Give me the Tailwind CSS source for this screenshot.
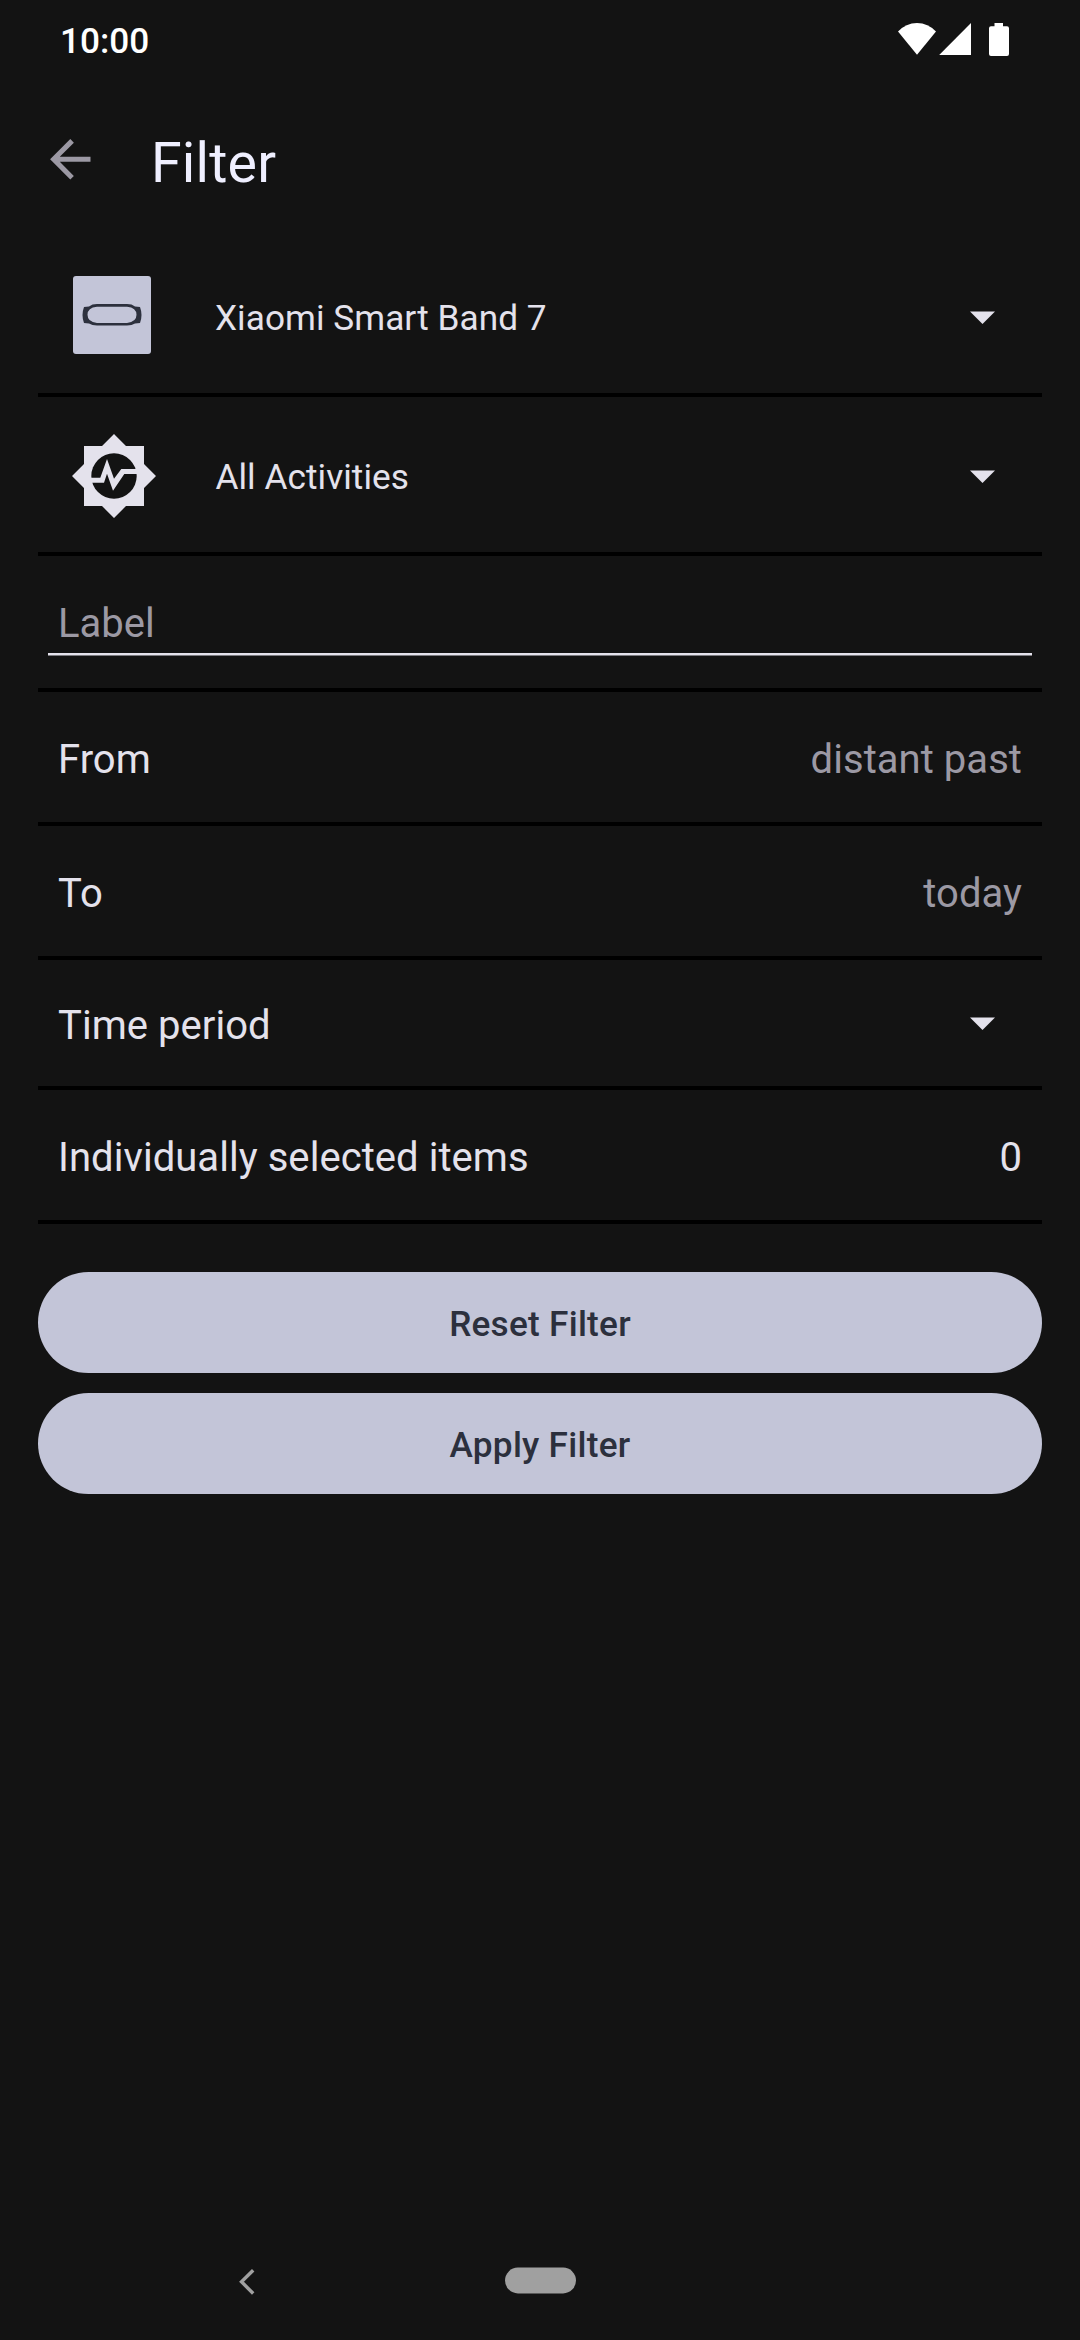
<!DOCTYPE html>
<html lang="en">
<head>
<meta charset="utf-8">
<title>Filter</title>
<script src="https://cdn.jsdelivr.net/npm/@tailwindcss/browser@4"></script>
</head>
<body class="bg-[#131313]">
<div class="w-[1080px] h-[2340px] flex flex-col overflow-hidden bg-[#131313] text-[#e4e2ec] font-['Roboto',sans-serif] leading-none">
  <!-- Status bar -->
  <header class="h-20 flex justify-between pl-[60px] pr-[71px]">
    <span class="pt-[24px] text-[35.2px] font-medium text-white">10:00</span>
    <svg class="w-[111px] h-[34px] mt-[23px] fill-white" viewBox="0 0 111 34">
      <path d="M0 8.6Q8 0 19 0T38 8.6L19 31.7Z"/>
      <path d="M73 0V32H41.2Z"/>
      <path d="M96.5 0H105V3.2H109Q111 3.2 111 5.2V31Q111 33 109 33H93Q91 33 91 31V5.2Q91 3.2 93 3.2H96.5Z"/>
    </svg>
  </header>

  <!-- App bar -->
  <div class="h-[154px] flex pl-10">
    <svg class="w-[60.6px] h-[60.6px] mt-[49.2px] fill-[#9c99a4]" viewBox="0 0 24 24"><path d="M20 11H7.83l5.59-5.59L12 4l-8 8 8 8 1.41-1.41L7.83 13H20v-2z"/></svg>
    <h1 class="ml-[50.4px] mt-[56px] text-[55.5px] tracking-[0.2px] text-[#efefff]">Filter</h1>
  </div>

  <main class="flex flex-col px-[38px]">
    <div class="h-[163px] flex items-start justify-between border-b-4 border-black pl-[35px] pr-[47px]">
      <div class="flex">
        <svg class="w-[78px] h-[78px] mt-[42px]" viewBox="0 0 78 78">
          <rect width="78" height="78" rx="3" fill="#c3c5d8"/>
          <path fill="#2c303d" fill-rule="evenodd" d="M24 28H54Q59 28 62 30.400L67 31Q68.500 35 68.500 39T67 47L62 47.400Q59 49.500 54 49.500H24Q19 49.500 16 47.400L11 47Q9.500 43 9.500 39T11 31L16 30.400Q19 28 24 28ZM24 30.700Q14.500 31.500 14.500 38.800T24 46.900H54Q63.500 46 63.500 38.800T54 30.700Z"/>
        </svg>
        <span class="ml-[64px] mt-[67px] text-[35.2px] tracking-[0.05px]">Xiaomi Smart Band 7</span>
      </div>
      <svg class="w-[25px] h-[13px] mt-[77px] fill-[#e4e2ec]" viewBox="0 0 25 13"><path d="M0 .5H25L12.500 13Z"/></svg>
    </div>

    <div class="h-[159px] flex items-start justify-between border-b-4 border-black pl-[34px] pr-[47px]">
      <div class="flex">
        <svg class="w-[84px] h-[84px] mt-[37px]" viewBox="-42 -42 84 84">
          <path fill="#e4e2ec" d="M0-42L12-30H30V-12L42 0 30 12V30H12L0 42-12 30H-30V12L-42 0-30-12V-30H-12Z"/>
          <circle r="22.700" fill="#131313"/>
          <path fill="#e4e2ec" d="M-24 1.700H-13.700L-7-17 0 2.700 7.300-7H23V-2H10.300L-1 14.700-7-2.300-10 6.700H-24Z"/>
        </svg>
        <span class="ml-[59.5px] mt-[63px] text-[35.2px] tracking-[0.05px]">All Activities</span>
      </div>
      <svg class="w-[25px] h-[13px] mt-[73px] fill-[#e4e2ec]" viewBox="0 0 25 13"><path d="M0 .5H25L12.500 13Z"/></svg>
    </div>

    <div class="h-[136px] border-b-4 border-black px-[10px]">
      <div class="h-[99px] border-b-2 border-[#e4e2ec] pl-[10px] pt-[48px] text-[40px] leading-[40px] text-[#9c99a4]">Label</div>
      <div class="h-px bg-[#e4e2ec]/50"></div>
    </div>

    <div class="h-[134px] flex items-center justify-between border-b-4 border-black px-5 pt-[6px] text-[40px] tracking-[0.05px]">
      <span>From</span><span class="text-[#9c99a4]">distant past</span>
    </div>
    <div class="h-[134px] flex items-center justify-between border-b-4 border-black px-5 pt-[6px] text-[40px] tracking-[0.05px]">
      <span>To</span><span class="text-[#9c99a4]">today</span>
    </div>
    <div class="h-[130px] flex items-center justify-between border-b-4 border-black pl-5 pr-[47px] text-[40px] tracking-[0.05px]">
      <span class="pt-[6px]">Time period</span>
      <svg class="w-[25px] h-[13px] mt-px fill-[#e4e2ec]" viewBox="0 0 25 13"><path d="M0 .5H25L12.500 13Z"/></svg>
    </div>
    <div class="h-[134px] flex items-center justify-between border-b-4 border-black px-5 pt-[6px] text-[40px] tracking-[0.05px]">
      <span>Individually selected items</span><span>0</span>
    </div>

    <div class="mt-12 flex flex-col gap-5 text-[35.2px] font-medium tracking-[0.25px] text-[#2c303d]">
      <button class="h-[101px] rounded-full bg-[#c3c5d8] pt-[5px]">Reset Filter</button>
      <button class="h-[101px] rounded-full bg-[#c3c5d8] pt-[5px]">Apply Filter</button>
    </div>
  </main>

  <!-- Navigation bar -->
  <nav class="mt-auto h-[76px] flex items-start pl-[239px]">
    <svg class="w-4 h-[26px] mt-[5px]" viewBox="0 0 16 26" fill="none" stroke="#a0a0a0" stroke-width="3.400"><path d="M14.200 1.200L2.500 12.800 14.200 24.500"/></svg>
    <svg class="ml-[250px] mt-[3px] w-[71px] h-[27px] fill-[#a0a0a0]" viewBox="0 0 71 27"><rect y=".6" width="71" height="25.800" rx="12.900"/></svg>
  </nav>
</div>
</body>
</html>
